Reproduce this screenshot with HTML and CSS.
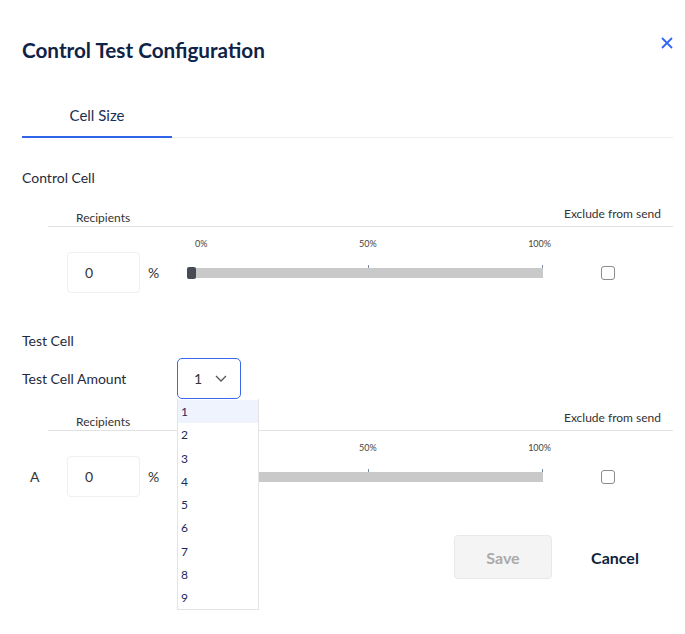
FILE: index.html
```html
<!DOCTYPE html>
<html lang="en">
<head>
    <meta charset="UTF-8">
    <meta name="viewport" content="width=device-width, initial-scale=1.0">
    <title>Control Test Configuration</title>
    <link rel="stylesheet" href="styles.css">
</head>
<body>

    <div class="modal">
        <div class="modal-header">
            <h2 class="modal-title">Control Test Configuration</h2>
            <button class="close-btn" aria-label="Close">
                <svg width="12" height="12" viewBox="0 0 12 12"><path d="M1 1 L11 11 M11 1 L1 11" stroke="#3366ee" stroke-width="1.8" fill="none"/></svg>
            </button>
        </div>

        <div class="tabs">
            <div class="tab active">Cell Size</div>
        </div>

        <!-- control cell -->
        <div class="section-title">Control Cell</div>
        <div class="cell-table">
            <div class="table-head">
                <span class="head-recipients">Recipients</span>
                <span class="head-exclude">Exclude from send</span>
            </div>
            <div class="cell-row">
                <div class="scale">
                    <span>0%</span><span>50%</span><span>100%</span>
                </div>
                <div class="row-label"></div>
                <div class="pct-input">0</div>
                <div class="pct-sign">%</div>
                <div class="track">
                    <span class="tick tick-mid"></span>
                    <span class="tick tick-end"></span>
                    <span class="thumb"></span>
                </div>
                <div class="check-col"><span class="checkbox"></span></div>
            </div>
        </div>

        <!-- test cell -->
        <div class="section-title test-title">Test Cell</div>
        <div class="amount-row">
            <span class="amount-label">Test Cell Amount</span>
            <div class="select">
                <span>1</span>
                <svg width="12" height="7" viewBox="0 0 12 7"><path d="M1 1 L6 6 L11 1" stroke="#555" stroke-width="1.3" fill="none"/></svg>
                <ul class="options">
                    <li class="selected">1</li>
                    <li>2</li>
                    <li>3</li>
                    <li>4</li>
                    <li>5</li>
                    <li>6</li>
                    <li>7</li>
                    <li>8</li>
                    <li>9</li>
                </ul>
            </div>
        </div>
        <div class="cell-table test-table">
            <div class="table-head">
                <span class="head-recipients">Recipients</span>
                <span class="head-exclude">Exclude from send</span>
            </div>
            <div class="cell-row">
                <div class="scale">
                    <span>0%</span><span>50%</span><span>100%</span>
                </div>
                <div class="row-label">A</div>
                <div class="pct-input">0</div>
                <div class="pct-sign">%</div>
                <div class="track">
                    <span class="tick tick-mid"></span>
                    <span class="tick tick-end"></span>
                    <span class="thumb"></span>
                </div>
                <div class="check-col"><span class="checkbox"></span></div>
            </div>
        </div>

        <div class="modal-footer">
            <button class="btn btn-save" disabled>Save</button>
            <button class="btn btn-cancel">Cancel</button>
        </div>
    </div>

</body>
</html>
```

FILE: styles.css
```css
body { margin: 0; background: white; font-family: Lato, "Noto Sans", sans-serif; color: #1f2b3c; }
.modal { padding: 0 12px 0 22px; min-height: 634px; box-sizing: border-box; }

.modal-header { display: flex; justify-content: space-between; align-items: flex-start; padding-top: 38px; }
.modal-title { margin: 0; font-size: 20.7px; line-height: 24px; font-weight: 700; color: #0f2347; }
.close-btn { background: none; border: none; padding: 0; margin-top: -1px; line-height: 0; cursor: pointer; }

.tabs { display: flex; margin-top: 32px; border-bottom: 1px solid #eeeeee; }
.tab { width: 150px; text-align: center; font-size: 15px; line-height: 20px; padding: 11px 0 11px; color: #1b2f55; }
.tab.active { border-bottom: 2px solid #2f63ea; margin-bottom: -1px; }

.section-title { font-size: 14px; line-height: 20px; margin-top: 30px; color: #1f2b3c; }
.test-title { margin-top: 38px; }

.cell-table { margin-top: 18px; }
.test-table { margin-top: 11px; }
.table-head { display: flex; justify-content: space-between; align-items: flex-end; margin-left: 26px; border-bottom: 1px solid #e2e2e2; font-size: 12px; line-height: 16px; color: #333; }
.head-recipients { padding-left: 28px; }
.head-exclude { padding: 0 12px 4px 0; }

.cell-row { display: grid; grid-template-columns: 45px 73px 47px 356px 1fr; grid-template-rows: auto 41px; row-gap: 3px; align-items: center; padding-top: 12px; }
.scale { grid-column: 4; grid-row: 1; display: flex; justify-content: space-between; margin: 0 -8px 0 8px; font-size: 9px; line-height: 10px; color: #444; }
.row-label { grid-row: 2; font-size: 14px; padding-left: 8px; color: #333; }
.pct-input { grid-row: 2; height: 39px; border: 1px solid #efefef; border-radius: 4px; font-size: 14px; line-height: 39px; padding-left: 17px; color: #333; }
.pct-sign { grid-row: 2; font-size: 14px; padding-left: 8px; color: #333; }
.track { grid-row: 2; position: relative; height: 10px; background: #c9c9c9; }
.thumb { position: absolute; left: 0; top: -1px; width: 9px; height: 12px; background: #464b54; border-radius: 2px; }
.tick { position: absolute; top: -3px; width: 1px; height: 3px; background: #7a8aa0; }
.tick-mid { left: 181px; }
.tick-end { right: 0; }
.check-col { grid-row: 2; display: flex; justify-content: center; }
.checkbox { width: 12px; height: 12px; border: 1px solid #8c8c8c; border-radius: 3px; }

.amount-row { display: flex; align-items: center; margin-top: 7px; }
.amount-label { width: 155px; font-size: 14px; color: #1f2b3c; }
.select { position: relative; display: flex; align-items: center; gap: 13px; box-sizing: border-box; width: 64px; height: 41px; padding-left: 16px; border: 1px solid #3a67ee; border-radius: 5px; font-size: 14px; color: #333; }
.options { position: absolute; top: 40px; left: -1px; width: 80px; margin: 0; padding: 1px 0 0; list-style: none; background: white; border: 1px solid #e4e4e4; border-top: none; z-index: 2; }
.options li { height: 23.25px; line-height: 23px; padding-left: 3px; font-size: 12px; color: #1c2a5c; }
.options li.selected { background: #eff3fd; }

.modal-footer { display: flex; justify-content: flex-end; gap: 14px; margin-top: 38px; padding-right: 9px; }
.btn { width: 98px; height: 44px; border-radius: 4px; font-family: Lato, "Noto Sans", sans-serif; font-size: 16px; font-weight: 700; cursor: pointer; }
.btn-save { background: #f4f4f4; border: 1px solid #e9e9e9; color: #aaaaaa; }
.btn-cancel { background: none; border: none; color: #0d1f3c; }
```
